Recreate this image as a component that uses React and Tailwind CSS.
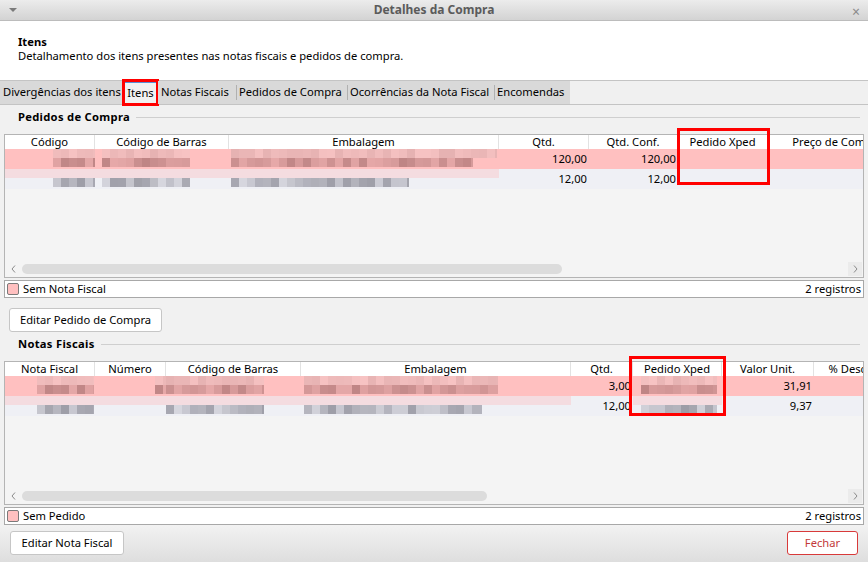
import React from "react";

const FONT = { fontFamily: '"Noto Sans", "Open Sans", sans-serif' };

// pseudo-random pixelation for the blurred cells
function rng(seed) {
  let s = seed;
  return () => {
    s = (s * 9301 + 49297) % 233280;
    return s / 233280;
  };
}

const TONES = {
  pinkTop: [[230, 178, 178], [248, 196, 196]],
  pinkBot: [[190, 132, 132], [230, 168, 168]],
  lightPink: [[238, 212, 218], [246, 224, 228]],
  grayBot: [[156, 156, 166], [214, 214, 222]],
};

const Mosaic = ({ offset, width, seed, tone }) => {
  const r = rng(seed);
  const [a, b] = TONES[tone];
  const count = Math.ceil(width / 8);
  const squares = Array.from({ length: count }, (_, i) => {
    const t = r();
    const c = a.map((v, k) => Math.round(v + (b[k] - v) * t));
    const w = i === count - 1 ? width - i * 8 : 8;
    return { c: `rgb(${c[0]},${c[1]},${c[2]})`, w };
  });
  return (
    <div className="flex h-[9px]" style={{ marginLeft: offset }}>
      {squares.map((s, i) => (
        <div key={i} className="h-full shrink-0" style={{ width: s.w, background: s.c }} />
      ))}
    </div>
  );
};

// a data cell: either a number or two stacked rows of pixelation
const Cell = ({ w, cell, row, seed }) => {
  const pink = row === 0;
  if (cell && cell.num) {
    return (
      <div className={`${w} shrink-0 h-full text-right pr-[2px] leading-[20px] text-[11.2px] text-black`}>
        {cell.num}
      </div>
    );
  }
  return (
    <div className={`${w} shrink-0 h-full overflow-hidden`}>
      {cell && cell.strip && (
        <div className="h-[9px] bg-[#f4dce0]">
          {cell.top && <Mosaic offset={cell.top[0]} width={cell.top[1]} seed={seed + 7} tone="lightPink" />}
        </div>
      )}
      {cell && !cell.strip && cell.top && (
        <Mosaic offset={cell.top[0]} width={cell.top[1]} seed={seed + 3} tone={pink ? "pinkTop" : "lightPink"} />
      )}
      {cell && cell.bot && (
        <Mosaic offset={cell.bot[0]} width={cell.bot[1]} seed={seed + 11} tone={pink ? "pinkBot" : "grayBot"} />
      )}
    </div>
  );
};

const Chevron = ({ dir }) => (
  <svg width="5" height="8" viewBox="0 0 5 8">
    <path d={dir === "left" ? "M4 0.5 L1 4 L4 7.5" : "M1 0.5 L4 4 L1 7.5"} fill="none" stroke="#8a8a8a" strokeWidth="1" />
  </svg>
);

const Table = ({ columns, rows, trackWidth, marker }) => (
  <div className="relative h-[144px] border border-[#b4b4b4] bg-[#f4f4f4] flex flex-col">
    <div className="flex-1 overflow-hidden">
      <div className="flex h-[14px] bg-white">
        {columns.map((c) => (
          <div
            key={c.title}
            className={`${c.w} shrink-0 border-r border-[#e2e2e2] text-center text-[11.2px] leading-[14px] text-black whitespace-nowrap overflow-hidden`}
          >
            {c.title}
          </div>
        ))}
      </div>
      {rows.map((r, ri) => (
        <div key={ri} className={`flex h-[20px] ${ri === 0 ? "bg-[#ffc0c0]" : "bg-[#eff0f5]"}`}>
          {columns.map((c, ci) => (
            <Cell key={ci} w={c.w} cell={r[ci]} row={ri} seed={ri * 97 + ci * 31 + 5} />
          ))}
        </div>
      ))}
    </div>
    <div className="flex items-center h-[15px] pb-[1px]">
      <span className="w-[17px] flex justify-center">
        <Chevron dir="left" />
      </span>
      <div className={`${trackWidth} h-[10px] rounded-full bg-[#dcdcdc]`} />
      <div className="flex-1" />
      <span className="w-[14px] h-[14px] mr-[1px] bg-[#ebebeb] flex items-center justify-center">
        <Chevron dir="right" />
      </span>
    </div>
    {marker}
  </div>
);

const StatusBar = ({ label }) => (
  <div className="flex items-center h-[18px] mt-[2px] border border-[#a8a8a8] bg-white pl-[2px] pr-[2px]">
    <span className="w-[12px] h-[12px] rounded-[2px] border border-[#7a7a7a] bg-[#ffc0c0]" />
    <span className="ml-[4px] text-[11.2px] text-black">{label}</span>
    <span className="ml-auto text-[11.2px] text-black">2 registros</span>
  </div>
);

const GroupLabel = ({ title }) => (
  <div className="flex items-center h-[14px] pl-[14px] pr-[4px]">
    <span className="text-[11.2px] font-bold tracking-[0.3px] text-black">{title}</span>
    <div className="flex-1 ml-[6px] h-px bg-[#cfcfcf]" />
  </div>
);

const Button = ({ children, className }) => (
  <button className={`h-[24px] rounded-[3px] border bg-white text-[11.2px] ${className}`}>{children}</button>
);

const cols1 = [
  { title: "Código", w: "w-[90px]" },
  { title: "Código de Barras", w: "w-[134px]" },
  { title: "Embalagem", w: "w-[270px]" },
  { title: "Qtd.", w: "w-[90px]" },
  { title: "Qtd. Conf.", w: "w-[89px]" },
  { title: "Pedido Xped", w: "w-[90px]" },
  { title: "Preço de Compra", w: "w-[140px]" },
];

const rows1 = [
  [
    { top: [48, 42], bot: [48, 42] },
    { top: [7, 88], bot: [7, 88] },
    { top: [2, 266], bot: [2, 242] },
    { num: "120,00" },
    { num: "120,00" },
    null,
    null,
  ],
  [
    { strip: true, bot: [48, 42] },
    { strip: true, bot: [7, 88] },
    { strip: true, bot: [2, 178] },
    { num: "12,00" },
    { num: "12,00" },
    null,
    null,
  ],
];

const cols2 = [
  { title: "Nota Fiscal", w: "w-[90px]" },
  { title: "Número", w: "w-[71px]" },
  { title: "Código de Barras", w: "w-[135px]" },
  { title: "Embalagem", w: "w-[270px]" },
  { title: "Qtd.", w: "w-[62px]" },
  { title: "Pedido Xped", w: "w-[89px]" },
  { title: "Valor Unit.", w: "w-[92px]" },
  { title: "% Desconto", w: "w-[92px]" },
];

const rows2 = [
  [
    { top: [32, 57], bot: [32, 57] },
    { top: [60, 11], bot: [60, 11] },
    { top: [0, 98], bot: [0, 98] },
    { top: [3, 194], bot: [3, 194] },
    { num: "3,00" },
    { top: [8, 76], bot: [8, 76] },
    { num: "31,91" },
    null,
  ],
  [
    { strip: true, bot: [32, 57] },
    { strip: true },
    { strip: true, bot: [0, 98] },
    { strip: true, bot: [3, 178] },
    { num: "12,00" },
    { strip: true, bot: [8, 76] },
    { num: "9,37" },
    null,
  ],
];

const tabs = [
  { label: "Divergências dos itens", w: "w-[123px]" },
  { label: "Itens", w: "w-[35px]", active: true },
  { label: "Notas Fiscais", w: "w-[78px]" },
  { label: "Pedidos de Compra", w: "w-[111px]" },
  { label: "Ocorrências da Nota Fiscal", w: "w-[147px]" },
  { label: "Encomendas", w: "w-[76px]" },
];

export default function App() {
  return (
    <div className="w-[868px] h-[562px] overflow-hidden flex flex-col bg-[#f1f1f1]" style={FONT}>
      {/* Title bar */}
      <div className="relative h-[21px] shrink-0 flex items-center justify-center bg-gradient-to-b from-[#ececec] to-[#d3d3d3] border-b border-[#bcbcbc]">
        <svg className="absolute left-[8px] top-[7px]" width="10" height="6" viewBox="0 0 10 6">
          <path d="M1 1 L9 1 L5 5 Z" fill="#7a7a7a" />
        </svg>
        <span className="text-[12px] font-bold text-[#5b5b5b]">Detalhes da Compra</span>
        <span className="absolute right-[8px] top-[1px] text-[14px] text-[#8a8a8a]">×</span>
      </div>

      {/* Header */}
      <div className="h-[59px] shrink-0 bg-white pl-[18px] pt-[13px]">
        <div className="text-[11.2px] font-bold leading-[15px] text-black">Itens</div>
        <div className="text-[11.2px] leading-[14px] text-black">
          Detalhamento dos itens presentes nas notas fiscais e pedidos de compra.
        </div>
      </div>

      {/* Tab bar */}
      <div className="h-[25px] shrink-0 flex border-t border-b border-[#c4c4c4] bg-[#f0f0f0]">
        {tabs.map((t, i) => (
          <div
            key={t.label}
            className={`relative ${t.w} flex items-center h-full text-[11.2px] text-black whitespace-nowrap ${
              t.active ? "bg-[#f1f1f1] justify-center border-t-2 border-t-[#5a8ed6]" : "bg-[#d9d9d9] pl-[3px]"
            }`}
          >
            {!t.active && i > 0 && !tabs[i - 1].active && (
              <span className="absolute left-0 top-[4px] h-[15px] w-px bg-[#b0b0b0]" />
            )}
            {t.label}
            {t.active && (
              <span className="absolute left-[-1px] right-[-1px] top-[-4px] bottom-[-2px] border-[3px] border-[#ff0000]" />
            )}
          </div>
        ))}
      </div>

      {/* Content */}
      <div className="flex-1 flex flex-col px-[4px] pt-[5px]">
        <GroupLabel title="Pedidos de Compra" />
        <div className="mt-[10px]">
          <Table
            columns={cols1}
            rows={rows1}
            trackWidth="w-[540px]"
            marker={<span className="absolute left-[672px] top-[-7px] w-[93px] h-[57px] border-[3px] border-[#ff0000]" />}
          />
        </div>
        <StatusBar label="Sem Nota Fiscal" />
        <div className="mt-[10px] pl-[5px] flex">
          <Button className="w-[153px] border-[#c6c6c6] text-black">Editar Pedido de Compra</Button>
        </div>
        <div className="mt-[5px]">
          <GroupLabel title="Notas Fiscais" />
        </div>
        <div className="mt-[10px]">
          <Table
            columns={cols2}
            rows={rows2}
            trackWidth="w-[465px]"
            marker={<span className="absolute left-[624px] top-[-6px] w-[97px] h-[60px] border-[3px] border-[#ff0000]" />}
          />
        </div>
        <StatusBar label="Sem Pedido" />
      </div>

      {/* Bottom bar */}
      <div className="h-[38px] shrink-0 flex items-start justify-between pt-[6px] px-[10px] bg-gradient-to-b from-[#f2f2f2] to-[#dedede] border-b border-[#a8a8a8]">
        <Button className="w-[114px] border-[#c6c6c6] text-black">Editar Nota Fiscal</Button>
        <Button className="w-[71px] border-[#d83a3a] text-[#c33a3a]">Fechar</Button>
      </div>
    </div>
  );
}
